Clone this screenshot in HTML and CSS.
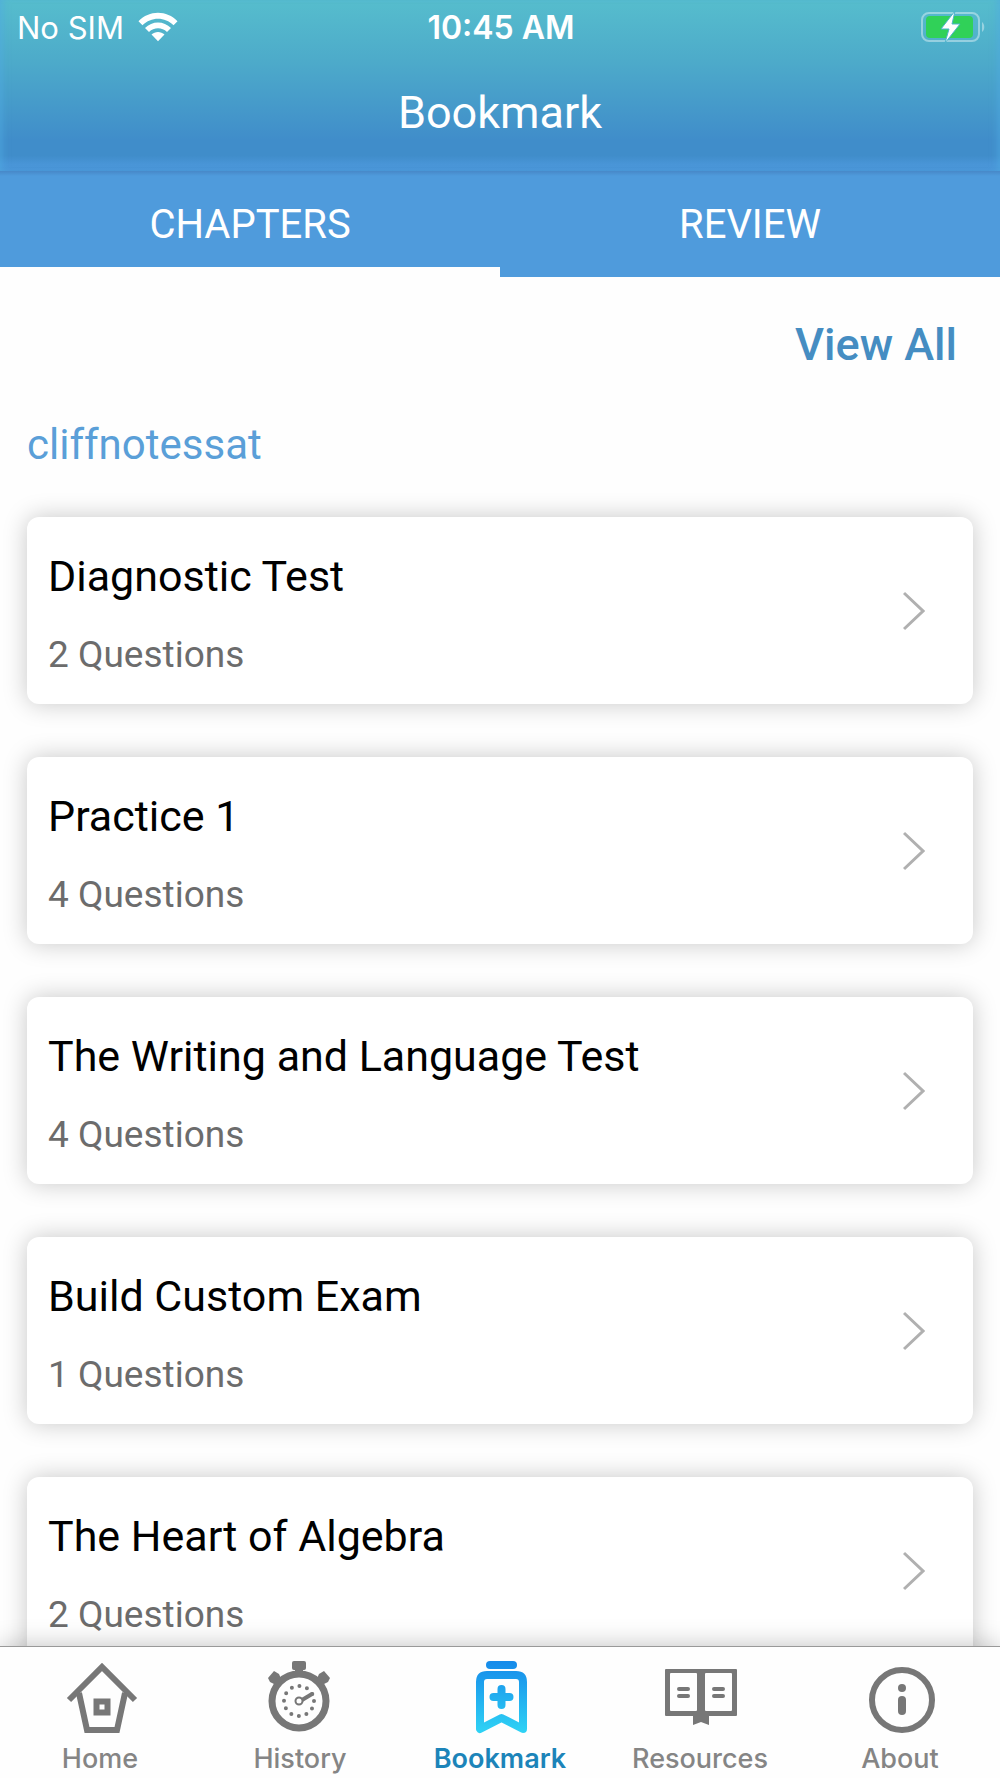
FILE: index.html
```html
<!doctype html>
<html lang="en">
 <head>
  <meta charset="UTF-8">
  <meta name="viewport" content="width=device-width, initial-scale=1.0">
  <title>Bookmark</title>
  <link rel="stylesheet" href="styles.css">
 </head>
 <body>
  <header class="header">
   <div class="status">
    <div class="carrier">
     <span>No SIM</span>
     <svg width="40" height="30" viewBox="0 0 40 30" fill="#fff">
      <path d="M0.500 9.300C11 -2.100 29 -2.100 39.500 9.300L35.500 13.300C27 4.500 13 4.500 4.500 13.300Z"/>
      <path d="M7 16C14 8.500 26 8.500 33 16L29 20C24 15 16 15 11 20Z"/>
      <path d="M13.500 22.500C17 19 23 19 26.500 22.500L20 29.200Z"/>
     </svg>
    </div>
    <time class="clock">10:45 AM</time>
    <svg class="battery" width="64" height="32" viewBox="0 0 64 32">
     <rect x="1" y="2" width="57" height="28" rx="7" fill="none" stroke="#fff" stroke-opacity=".4" stroke-width="2"/>
     <path d="M61 11C64 13 64 19 61 21Z" fill="#fff" fill-opacity=".4"/>
     <rect x="5" y="5" width="47" height="22" rx="4" fill="#30d158"/>
     <path d="M34 0L20 18H28L24 32L39 13H31Z" fill="#fff" stroke="#4fb3cc" stroke-width="1"/>
    </svg>
   </div>
   <h1>Bookmark</h1>
  </header>
  <div class="tabs">
   <button class="tab active" type="button">CHAPTERS</button>
   <button class="tab" type="button">REVIEW</button>
  </div>
  <main class="content">
   <a class="view-all" href="#">View All</a>
   <h2>cliffnotessat</h2>
   <a class="card" href="#">
    <div>
     <h3>Diagnostic Test</h3>
     <p>2 Questions</p>
    </div>
    <svg class="arrow" width="22" height="40" viewBox="0 0 22 40"><path d="M1 2L20 20L1 38"/></svg>
   </a>
   <a class="card" href="#">
    <div>
     <h3>Practice 1</h3>
     <p>4 Questions</p>
    </div>
    <svg class="arrow" width="22" height="40" viewBox="0 0 22 40"><path d="M1 2L20 20L1 38"/></svg>
   </a>
   <a class="card" href="#">
    <div>
     <h3>The Writing and Language Test</h3>
     <p>4 Questions</p>
    </div>
    <svg class="arrow" width="22" height="40" viewBox="0 0 22 40"><path d="M1 2L20 20L1 38"/></svg>
   </a>
   <a class="card" href="#">
    <div>
     <h3>Build Custom Exam</h3>
     <p>1 Questions</p>
    </div>
    <svg class="arrow" width="22" height="40" viewBox="0 0 22 40"><path d="M1 2L20 20L1 38"/></svg>
   </a>
   <a class="card" href="#">
    <div>
     <h3>The Heart of Algebra</h3>
     <p>2 Questions</p>
    </div>
    <svg class="arrow" width="22" height="40" viewBox="0 0 22 40"><path d="M1 2L20 20L1 38"/></svg>
   </a>
  </main>
  <nav class="navbar">
   <a href="#">
    <svg width="76" height="76" viewBox="0 0 76 76" fill="none" stroke="#777" stroke-width="6">
     <path d="M7 41L40 8L73 41"/>
     <path d="M17 34L25 71H55L63 34"/>
     <rect x="34.500" y="42.500" width="11" height="11"/>
    </svg>
    <span>Home</span>
   </a>
   <a href="#">
    <svg width="76" height="76" viewBox="0 0 76 76" fill="none" stroke="#777">
     <circle cx="37" cy="42" r="27" stroke-width="7"/>
     <g fill="#777" stroke="none">
      <rect x="30" y="2" width="14" height="9" rx="2"/>
      <rect x="33" y="9" width="8" height="8"/>
      <path d="M6 19L12 12L17 15L20 22L14 26L8 23Z"/>
      <path d="M68 19L62 12L57 15L54 22L60 26L66 23Z"/>
     </g>
     <circle cx="37" cy="42" r="15" stroke-width="4" stroke-linecap="round" stroke-dasharray="0 7.854"/>
     <circle cx="37" cy="42" r="8" fill="#fff" stroke="none"/>
     <path d="M40 41L50 35" stroke-width="4" stroke-linecap="round"/>
     <circle cx="37" cy="42" r="3.500" fill="#fff" stroke-width="2"/>
    </svg>
    <span>History</span>
   </a>
   <a class="active" href="#">
    <svg width="76" height="76" viewBox="0 0 76 76" fill="none">
     <defs>
      <linearGradient id="blue" gradientUnits="userSpaceOnUse" x1="0" y1="3" x2="0" y2="74">
       <stop offset="0" stop-color="#168bea"/>
       <stop offset="1" stop-color="#2fd3f5"/>
      </linearGradient>
     </defs>
     <rect x="24" y="2" width="31" height="8" rx="4" fill="url(#blue)"/>
     <path d="M18 70V23Q18 16 25 16H54Q61 16 61 23V70L39.500 59Z" stroke="url(#blue)" stroke-width="8" stroke-linejoin="round"/>
     <path d="M39.500 30V46M31.500 38H47.500" stroke="url(#blue)" stroke-width="8" stroke-linecap="round"/>
    </svg>
    <span>Bookmark</span>
   </a>
   <a href="#">
    <svg width="76" height="76" viewBox="0 0 76 76">
     <path fill="#777" fill-rule="evenodd" d="M4 10H74Q75 10 75 11V56Q75 57 74 57H47V66L39 63L31 66V57H4Q3 57 3 56V11Q3 10 4 10ZM9 14Q8 14 8 15V51Q8 52 9 52H34Q35 52 35 51V15Q35 14 34 14ZM44 14Q43 14 43 15V51Q43 52 44 52H69Q70 52 70 51V15Q70 14 69 14Z"/>
     <path d="M17 30H26M17 37H26M52 30H61M52 37H61" stroke="#777" stroke-width="4" stroke-linecap="round"/>
    </svg>
    <span>Resources</span>
   </a>
   <a href="#">
    <svg width="76" height="76" viewBox="0 0 76 76" fill="none" stroke="#777">
     <circle cx="40" cy="41" r="30" stroke-width="6"/>
     <circle cx="40" cy="29" r="4" fill="#777" stroke="none"/>
     <path d="M40 41V52" stroke-width="8" stroke-linecap="round"/>
    </svg>
    <span>About</span>
   </a>
  </nav>
 </body>
</html>
```

FILE: styles.css
```css
* {
    box-sizing: border-box;
}

body {
    display: flex;
    flex-direction: column;
    height: 100vh;
    margin: 0;
    background: #fefefe;
    font-family: Roboto, sans-serif;
    overflow: hidden;
}

h1, h2, h3, p {
    margin: 0;
    font-weight: 400;
}

a {
    color: inherit;
    text-decoration: none;
}

.header {
    flex: none;
    height: 171px;
    color: white;
    text-align: center;
    background: linear-gradient(#56bdcd 0%, #4dabca 35%, #408dca 82%, #408dca 91%, #4995d7 96%, #4a96d8 100%);
    box-shadow: inset 8px 0 8px -6px rgba(80,170,225,0.7), inset -8px 0 8px -6px rgba(80,170,225,0.7);
}

.status {
    display: grid;
    grid-template-columns: 1fr auto 1fr;
    align-items: center;
    height: 54px;
    padding: 0 15px 0 17px;
    font-family: Inter, sans-serif;
    font-size: 31px;
}

.carrier {
    display: flex;
    align-items: center;
    gap: 14px;
}

.clock {
    font-size: 32px;
    font-weight: 600;
}

.battery {
    justify-self: end;
}

h1 {
    font-size: 45px;
    line-height: 118px;
}

.tabs {
    flex: none;
    display: flex;
    height: 106px;
    background: linear-gradient(#4788c8, #4f9bdc 5px);
}

.tab {
    flex: 1;
    padding: 10px 0 0;
    border: none;
    border-bottom: 10px solid transparent;
    background: none;
    color: white;
    font-family: inherit;
    font-size: 40px;
}

.tab.active {
    border-bottom-color: #fefefe;
}

.content {
    flex: 1;
    display: flex;
    flex-direction: column;
    min-height: 0;
    padding: 38px 27px 0;
    overflow: hidden;
}

.view-all {
    align-self: flex-end;
    padding: 0 16px;
    color: #458dc2;
    font-size: 45px;
    font-weight: 500;
    line-height: 60px;
}

h2 {
    margin: 40px 0 42px;
    color: #5a9fd8;
    font-size: 42px;
    line-height: 60px;
}

.card {
    flex: none;
    display: flex;
    justify-content: space-between;
    align-items: center;
    height: 187px;
    margin-bottom: 53px;
    padding: 0 48px 0 21px;
    border-radius: 12px;
    background: white;
    box-shadow: 0 0 24px rgba(0,0,0,0.22);
}

h3 {
    padding-top: 7px;
    color: black;
    font-size: 43px;
    line-height: 60px;
}

.card p {
    margin-top: 22px;
    color: #6c6c6c;
    font-size: 37px;
    line-height: 54px;
}

.arrow {
    fill: none;
    stroke: #b0b0b0;
    stroke-width: 3;
}

.navbar {
    position: relative;
    flex: none;
    display: flex;
    height: 132px;
    padding-top: 12px;
    border-top: 1px solid #999;
    background: #fefefe;
    box-shadow: 0 0 24px rgba(0,0,0,0.25);
    color: #858585;
    font-family: Inter, sans-serif;
    font-size: 27px;
    font-weight: 500;
    line-height: 36px;
}

.navbar a {
    flex: 1;
    display: flex;
    flex-direction: column;
    align-items: center;
    gap: 6px;
}

.navbar .active {
    color: #1c84b9;
    font-weight: 600;
}
```
